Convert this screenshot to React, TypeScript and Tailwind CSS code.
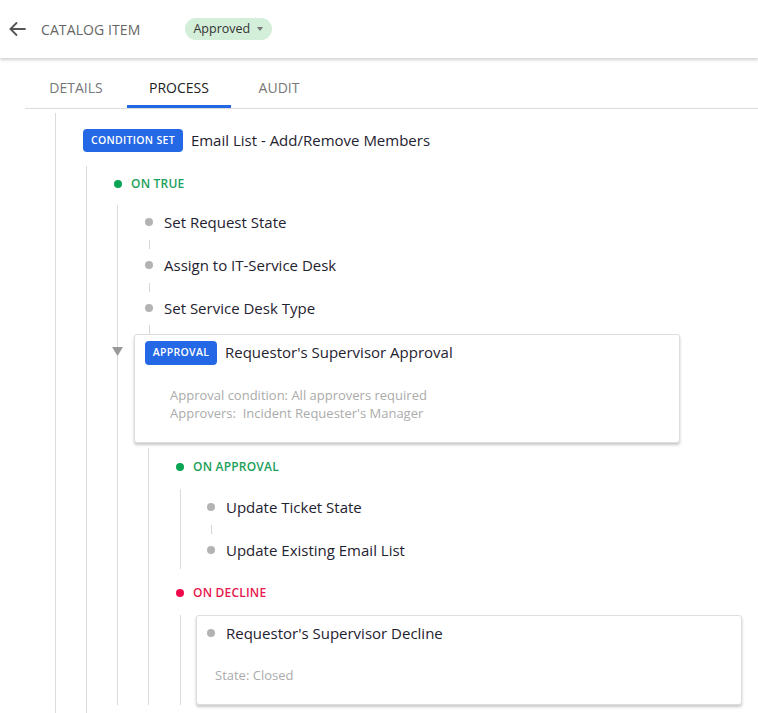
import React from "react";

const Dot = ({ color }: { color: string }) => (
  <span className={`block w-[8px] h-[8px] rounded-full shrink-0 ${color}`} />
);

function Item({ label, dotOffset }: { label: string; dotOffset: string }) {
  return (
    <div className={`flex items-center h-[24px] ${dotOffset}`}>
      <span className="block w-[8px] h-[8px] rounded-full bg-[#b3b3b3] shrink-0" />
      <span className="ml-[11px] text-[15px] leading-[24px] text-[#1f2230]">{label}</span>
    </div>
  );
}

function Connector({ left, className }: { left: string; className: string }) {
  return (
    <div className={className}>
      <div className={`${left} w-px h-[9px] bg-[#d6d6d6]`} />
    </div>
  );
}

export default function App() {
  return (
    <div className="w-[758px] h-[713px] overflow-hidden bg-white font-['Open_Sans',sans-serif] text-[#1f2230]">
      {/* Header */}
      <header className="relative z-10 h-[58px] flex items-center pl-[9px] bg-white shadow-[0_2px_3px_rgba(0,0,0,0.18)]">
        <svg width="17" height="16" viewBox="0 0 17 16" fill="none" stroke="#555" strokeWidth="1.8" strokeLinecap="round" strokeLinejoin="round">
          <path d="M16 8H1.5" />
          <path d="M7.5 2L1.5 8l6 6" />
        </svg>
        <span className="ml-[15px] text-[14px] text-[#666] tracking-[0.1px]">CATALOG ITEM</span>
        <span className="ml-[45px] h-[22px] pl-[8px] pr-[9px] flex items-center rounded-full bg-[#d3eed9] text-[12.5px] text-[#333]">
          Approved
          <svg className="ml-[7px]" width="6" height="4" viewBox="0 0 6 4">
            <path d="M0 0h6L3 4z" fill="#777" />
          </svg>
        </span>
      </header>

      {/* Tabs */}
      <nav className="ml-[25px] flex border-b border-[#dcdcdc]">
        {[
          { l: "DETAILS", a: false, w: "w-[102px]" },
          { l: "PROCESS", a: true, w: "w-[104px]" },
          { l: "AUDIT", a: false, w: "w-[96px]" },
        ].map((t) => (
          <div key={t.l} className={`${t.w} h-[50px] flex flex-col items-center`}>
            <span
              className={`mt-[20px] h-[20px] leading-[20px] text-[14px] ${
                t.a ? "text-[#222]" : "text-[#777]"
              }`}
            >
              {t.l}
            </span>
            <span className={`mt-auto h-[3px] w-full ${t.a ? "bg-[#2467e3]" : ""}`} />
          </div>
        ))}
      </nav>

      {/* Tree */}
      <div className="ml-[55px] mt-[4px] border-l border-[#dcdcdc] pt-[16px] pb-[40px]">
        <div className="flex items-center pl-[27px]">
          <span className="h-[23px] px-[8px] flex items-center rounded-[4px] bg-[#2468e5] text-white text-[10.5px] font-semibold tracking-[0.3px]">
            CONDITION SET
          </span>
          <span className="ml-[8px] text-[15px] leading-[20px] -mt-[2px]">Email List - Add/Remove Members</span>
        </div>

        <div className="ml-[30px] mt-[14px] border-l border-[#dcdcdc] pt-[8px] pb-[40px]">
          <div className="flex items-center h-[20px] pl-[27px]">
            <Dot color="bg-[#0aa454]" />
            <span className="ml-[9px] text-[12px] font-semibold text-[#1ba05a] tracking-[0.2px]">ON TRUE</span>
          </div>

          <div className="ml-[30px] mt-[11px] border-l border-[#dcdcdc] pt-[5px]">
            <Item label="Set Request State" dotOffset="pl-[27px]" />
            <Connector left="ml-[31px]" className="h-[19px] pt-[6px]" />
            <Item label="Assign to IT-Service Desk" dotOffset="pl-[27px]" />
            <Connector left="ml-[31px]" className="h-[19px] pt-[6px]" />
            <Item label="Set Service Desk Type" dotOffset="pl-[27px]" />
            <Connector left="ml-[31px]" className="h-[14px] pt-[5px]" />

            {/* Approval card */}
            <div className="relative pl-[16px]">
              <svg className="absolute left-[-6px] top-[13px]" width="11" height="9" viewBox="0 0 11 9">
                <rect x="0" y="-3" width="11" height="12" fill="white" />
                <path d="M0 0h11L5.5 9z" fill="#9a9a9a" />
              </svg>
              <div className="w-[546px] border border-[#dedede] rounded-[3px] bg-white shadow-[0_2px_3px_rgba(0,0,0,0.22)] pt-[6px] pb-[20px]">
                <div className="flex items-center pl-[10px]">
                  <span className="h-[24px] w-[72px] flex items-center justify-center rounded-[4px] bg-[#2468e5] text-white text-[10.5px] font-semibold tracking-[0.3px]">
                    APPROVAL
                  </span>
                  <span className="ml-[8px] text-[15px] leading-[20px] -mt-[2px]">Requestor's Supervisor Approval</span>
                </div>
                <div className="mt-[21px] pl-[35px] text-[13px] leading-[18px] text-[#ababab]">
                  <div>Approval condition: All approvers required</div>
                  <div>Approvers:&nbsp; Incident Requester's Manager</div>
                </div>
              </div>
            </div>

            {/* Approval children */}
            <div className="ml-[30px] mt-[5px] border-l border-[#dcdcdc] pt-[9px]">
              <div className="flex items-center h-[20px] pl-[27px]">
                <Dot color="bg-[#0aa454]" />
                <span className="ml-[9px] text-[12px] font-semibold text-[#1ba05a] tracking-[0.2px]">ON APPROVAL</span>
              </div>
              <div className="ml-[31px] mt-[12px] border-l border-[#dcdcdc] pt-[6px] pb-[7px]">
                <Item label="Update Ticket State" dotOffset="pl-[26px]" />
                <Connector left="ml-[30px]" className="h-[19px] pt-[6px]" />
                <Item label="Update Existing Email List" dotOffset="pl-[26px]" />
              </div>

              <div className="flex items-center h-[20px] pl-[27px] mt-[14px]">
                <Dot color="bg-[#f00a4b]" />
                <span className="ml-[9px] text-[12px] font-semibold text-[#e8174f] tracking-[0.2px]">ON DECLINE</span>
              </div>
              <div className="ml-[31px] mt-[12px] border-l border-[#dcdcdc] pl-[15px]">
                <div className="w-[546px] border border-[#dedede] rounded-[3px] bg-white shadow-[0_2px_3px_rgba(0,0,0,0.22)] pt-[5px] pb-[20px]">
                  <Item label="Requestor's Supervisor Decline" dotOffset="pl-[10px]" />
                  <div className="mt-[21px] pl-[18px] text-[13px] leading-[18px] text-[#ababab]">State: Closed</div>
                </div>
              </div>
            </div>
          </div>
        </div>
      </div>
    </div>
  );
}
